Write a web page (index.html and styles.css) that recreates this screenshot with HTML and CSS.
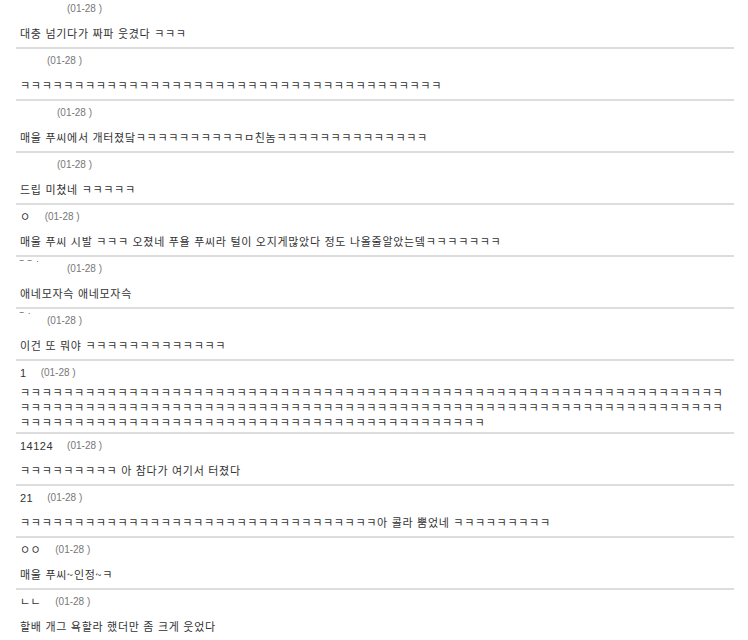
FILE: index.html
```html
<!DOCTYPE html>
<html lang="ko">
<head>
    <meta charset="UTF-8">
    <title>댓글</title>
    <link rel="stylesheet" href="styles.css">
</head>
<body>
    <ul class="comments">
        <li class="comment">
            <div class="meta"><span class="name blank w33"></span><span class="date">(01-28 )</span></div>
            <div class="text">대충 넘기다가 짜파 웃겼다 ㅋㅋㅋ</div>
        </li>
        <li class="comment">
            <div class="meta"><span class="name blank w13"></span><span class="date">(01-28 )</span></div>
            <div class="text">ㅋㅋㅋㅋㅋㅋㅋㅋㅋㅋㅋㅋㅋㅋㅋㅋㅋㅋㅋㅋㅋㅋㅋㅋㅋㅋㅋㅋㅋㅋㅋㅋㅋㅋㅋㅋㅋㅋㅋ</div>
        </li>
        <li class="comment">
            <div class="meta"><span class="name blank w23"></span><span class="date">(01-28 )</span></div>
            <div class="text">매울 푸씨에서 개터졌닼ㅋㅋㅋㅋㅋㅋㅋㅋㅋㅋㅁ친놈ㅋㅋㅋㅋㅋㅋㅋㅋㅋㅋㅋㅋㅋㅋ</div>
        </li>
        <li class="comment">
            <div class="meta"><span class="name blank w23"></span><span class="date">(01-28 )</span></div>
            <div class="text">드립 미쳤네 ㅋㅋㅋㅋㅋ</div>
        </li>
        <li class="comment">
            <div class="meta"><span class="name">ㅇ</span><span class="date">(01-28 )</span></div>
            <div class="text">매울 푸씨 시발 ㅋㅋㅋ 오졌네 푸욜 푸씨라 털이 오지게많았다 정도 나올줄알았는뎈ㅋㅋㅋㅋㅋㅋㅋ</div>
        </li>
        <li class="comment">
            <div class="meta"><span class="name marks w33">‾ ‾ ˙</span><span class="date">(01-28 )</span></div>
            <div class="text">애네모자슥 애네모자슥</div>
        </li>
        <li class="comment">
            <div class="meta"><span class="name marks w13">‾ ˙</span><span class="date">(01-28 )</span></div>
            <div class="text">이건 또 뭐야 ㅋㅋㅋㅋㅋㅋㅋㅋㅋㅋㅋㅋㅋ</div>
        </li>
        <li class="comment">
            <div class="meta"><span class="name">1</span><span class="date">(01-28 )</span></div>
            <div class="text">ㅋㅋㅋㅋㅋㅋㅋㅋㅋㅋㅋㅋㅋㅋㅋㅋㅋㅋㅋㅋㅋㅋㅋㅋㅋㅋㅋㅋㅋㅋㅋㅋㅋㅋㅋㅋㅋㅋㅋㅋㅋㅋㅋㅋㅋㅋㅋㅋㅋㅋㅋㅋㅋㅋㅋㅋㅋㅋㅋㅋㅋㅋㅋㅋㅋㅋㅋㅋㅋㅋㅋㅋㅋㅋㅋㅋㅋㅋㅋㅋㅋㅋㅋㅋㅋㅋㅋㅋㅋㅋㅋㅋㅋㅋㅋㅋㅋㅋㅋㅋㅋㅋㅋㅋㅋㅋㅋㅋㅋㅋㅋㅋㅋㅋㅋㅋㅋㅋㅋㅋㅋㅋㅋㅋㅋㅋㅋㅋㅋㅋㅋㅋㅋㅋㅋㅋㅋㅋㅋㅋㅋㅋㅋㅋㅋㅋㅋㅋㅋㅋㅋㅋㅋㅋㅋㅋㅋㅋㅋㅋㅋㅋㅋㅋㅋㅋㅋㅋㅋㅋㅋㅋㅋ</div>
        </li>
        <li class="comment">
            <div class="meta"><span class="name">14124</span><span class="date">(01-28 )</span></div>
            <div class="text">ㅋㅋㅋㅋㅋㅋㅋㅋㅋ 아 참다가 여기서 터졌다</div>
        </li>
        <li class="comment">
            <div class="meta"><span class="name">21</span><span class="date">(01-28 )</span></div>
            <div class="text">ㅋㅋㅋㅋㅋㅋㅋㅋㅋㅋㅋㅋㅋㅋㅋㅋㅋㅋㅋㅋㅋㅋㅋㅋㅋㅋㅋㅋㅋㅋㅋㅋㅋ아 콜라 뿜었네 ㅋㅋㅋㅋㅋㅋㅋㅋㅋ</div>
        </li>
        <li class="comment">
            <div class="meta"><span class="name">ㅇㅇ</span><span class="date">(01-28 )</span></div>
            <div class="text">매울 푸씨~인정~ㅋ</div>
        </li>
        <li class="comment">
            <div class="meta"><span class="name">ㄴㄴ</span><span class="date">(01-28 )</span></div>
            <div class="text">할배 개그 욕할라 했더만 좀 크게 웃었다</div>
        </li>
    </ul>
</body>
</html>
```

FILE: styles.css
```css
body {
    margin: 0;
    background: white;
    font-family: "Noto Sans CJK KR", "Noto Sans", sans-serif;
    color: #333;
}
.comments {
    list-style: none;
    margin: -3px 0 0 16px;
    padding: 0;
    width: 718px;
}
.comment {
    padding: 4px 0 2px 4px;
    border-bottom: 2px solid #ddd;
}
.meta {
    display: flex;
    align-items: flex-start;
    height: 16px;
    line-height: 16px;
}
.name {
    font-family: "Liberation Sans", "Noto Sans CJK KR", sans-serif;
    font-size: 11px;
    color: #333;
    letter-spacing: 0.5px;
}
.name.blank {
    display: block;
    height: 16px;
}
.name.marks {
    display: block;
    line-height: 10px;
    font-size: 10px;
    color: #555;
    letter-spacing: 1px;
    white-space: pre;
}
.w13 { width: 13px; }
.w23 { width: 23px; }
.w33 { width: 33px; }
.date {
    font-family: "Liberation Sans", Arial, sans-serif;
    font-size: 10px;
    color: #777;
    margin-left: 14px;
}
.text {
    margin-top: 4px;
    min-height: 24px;
    display: flex;
    align-items: center;
    font-size: 11px;
    letter-spacing: 0.7px;
    line-height: 15px;
    color: #333;
    word-break: break-all;
}
```
